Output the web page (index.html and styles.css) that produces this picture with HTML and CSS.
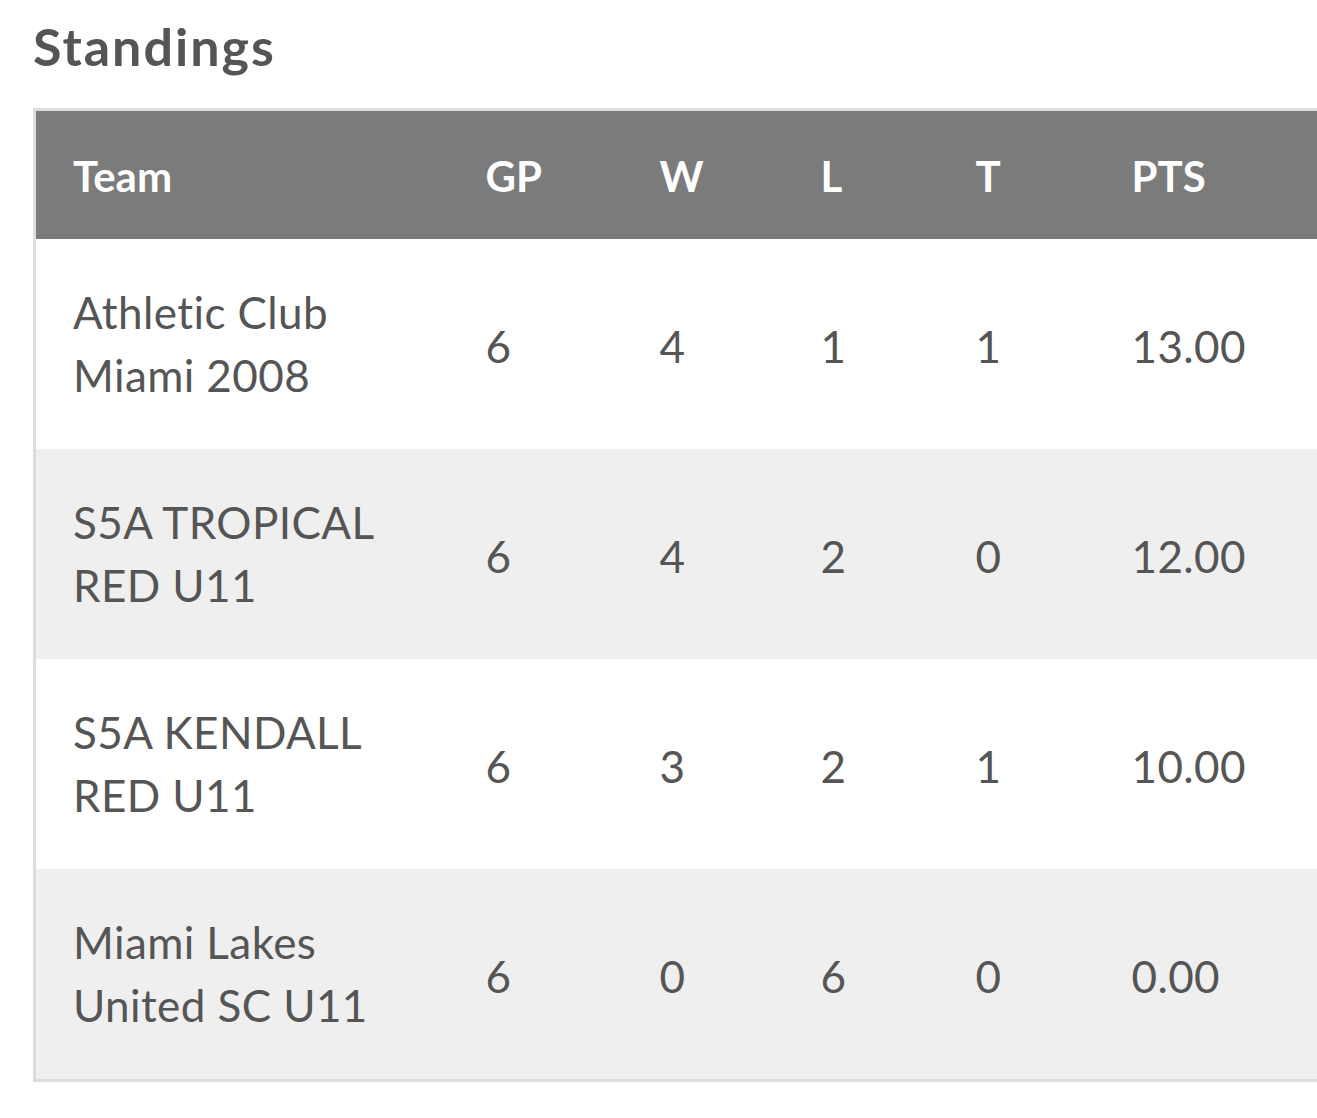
FILE: index.html
```html
<!DOCTYPE html>
<html>
<head>
<meta charset="utf-8">
<link rel="stylesheet" href="styles.css">
</head>
<body>
<div class="page">
  <h2 class="title">Standings</h2>
  <table class="standings">
    <colgroup>
      <col class="c-team"><col class="c-gp"><col class="c-w"><col class="c-l"><col class="c-t"><col class="c-pts">
    </colgroup>
    <thead>
      <tr><th>Team</th><th>GP</th><th>W</th><th>L</th><th>T</th><th>PTS</th></tr>
    </thead>
    <tbody>
      <tr><td>Athletic Club Miami 2008</td><td>6</td><td>4</td><td>1</td><td>1</td><td>13.00</td></tr>
      <tr><td>S5A TROPICAL RED U11</td><td>6</td><td>4</td><td>2</td><td>0</td><td>12.00</td></tr>
      <tr><td>S5A KENDALL RED U11</td><td>6</td><td>3</td><td>2</td><td>1</td><td>10.00</td></tr>
      <tr><td>Miami Lakes United SC U11</td><td>6</td><td>0</td><td>6</td><td>0</td><td>0.00</td></tr>
    </tbody>
  </table>
</div>
</body>
</html>
```

FILE: styles.css
```css
html, body {
  margin: 0;
  padding: 0;
  overflow: hidden;
  background: #fff;
}
.page {
  padding: 15px 0 0 33px;
  font-family: Lato, "Open Sans", sans-serif;
  color: #555;
}
.title {
  margin: 0 0 31px 0;
  font-size: 52px;
  font-weight: 700;
  line-height: 62px;
  letter-spacing: 2px;
  color: #555;
}
.standings {
  border-collapse: collapse;
  border: 3px solid #ddd;
  table-layout: fixed;
  width: 1400px;
}
.c-team { width: 414px; }
.c-gp { width: 174px; }
.c-w { width: 161px; }
.c-l { width: 155px; }
.c-t { width: 156px; }
.standings th,
.standings td {
  text-align: left;
  vertical-align: middle;
  line-height: 63px;
  padding: 42px 20px 42px 37px;
}
.standings th {
  background: #7b7b7b;
  color: #fff;
  font-size: 42px;
  font-weight: 700;
  padding-top: 34px;
  padding-bottom: 31px;
}
.standings td {
  font-size: 44px;
  letter-spacing: 0.4px;
  font-weight: 400;
  color: #555;
}
.standings td + td {
  padding-top: 44px;
  padding-bottom: 40px;
}
.standings tbody tr:nth-child(even) td {
  background: #efefef;
}
```
